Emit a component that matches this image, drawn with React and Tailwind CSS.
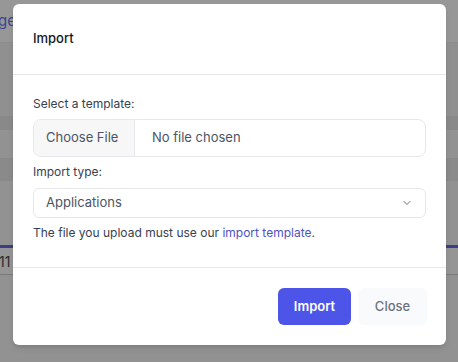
import React from "react";

export default function App() {
  return (
    <div
      className="relative w-[458px] h-[362px] overflow-hidden bg-[#929292]"
      style={{ fontFamily: "Inter, 'Noto Sans', sans-serif" }}
    >
      {/* dimmed page behind the modal */}
      <div className="flex flex-col">
        <div className="h-[42px] bg-[#979797] flex items-center">
          <span className="text-[15px] text-[#3b4690] -ml-[2px]">ge</span>
        </div>
        <div className="h-[1px] bg-[#8c8c8c]" />
        <div className="h-[73px] bg-[#909090]" />
        <div className="h-[14px] bg-[#898989]" />
        <div className="h-[28px] bg-[#929292]" />
        <div className="h-[23px] bg-[#8a8a8a]" />
        <div className="h-[64px] bg-[#929292]" />
        <div className="h-[3px] bg-[#3b3f8a]" />
        <div className="h-[26px] bg-[#959595] flex items-center">
          <span className="text-[14px] text-[#2a2a2a] -ml-[1px]">11</span>
        </div>
        <div className="h-[1px] bg-[#7a7a7a]" />
        <div className="flex-1 bg-[#929292]" />
      </div>

      {/* modal */}
      <div className="absolute left-[13px] top-[4px] w-[433px] h-[341px] bg-white rounded-md shadow-md flex flex-col">
        <div className="h-[71px] px-5 flex items-center border-b border-[#e5e7eb]">
          <h2 className="text-[13px] font-medium text-[#111827]">Import</h2>
        </div>
        <div className="px-5 pt-[19px] pb-[24px] border-b border-[#e5e7eb] flex flex-col">
          <label className="text-[12px] leading-5 text-[#374151] mb-[5px]">Select a template:</label>
          <div className="h-[38px] flex border border-[#e5e7eb] rounded-lg overflow-hidden">
            <div className="w-[101px] pl-3 flex items-center bg-[#f7f7f8] border-r border-[#e5e7eb] text-[13px] text-[#4b5563]">
              Choose File
            </div>
            <div className="pl-[17px] flex items-center text-[13px] text-[#4b5563]">No file chosen</div>
          </div>
          <label className="text-[12px] leading-5 text-[#374151] mt-[5px] mb-[6px]">Import type:</label>
          <div className="h-[30px] flex items-center justify-between border border-[#e5e7eb] rounded-md pl-3 pr-[12px]">
            <span className="text-[13px] text-[#4b5563]">Applications</span>
            <svg width="12" height="12" viewBox="0 0 24 24" fill="none" stroke="#6b7280" strokeWidth="2" strokeLinecap="round" strokeLinejoin="round">
              <path d="m6 9 6 6 6-6" />
            </svg>
          </div>
          <p className="text-[12px] leading-5 text-[#374151] mt-[5px]">
            The file you upload must use our{" "}
            <a className="text-[#4f52c4]">import template</a>.
          </p>
        </div>
        <div className="flex-1 flex items-start justify-end gap-[7px] pt-[20px] pr-[19px]">
          <button className="w-[73px] h-[37px] rounded-md bg-[#4c55e8] text-white text-[13px] font-semibold">
            Import
          </button>
          <button className="w-[69px] h-[37px] rounded-md bg-[#f9fafb] text-[#6b7280] text-[13px] font-medium">
            Close
          </button>
        </div>
      </div>
    </div>
  );
}
